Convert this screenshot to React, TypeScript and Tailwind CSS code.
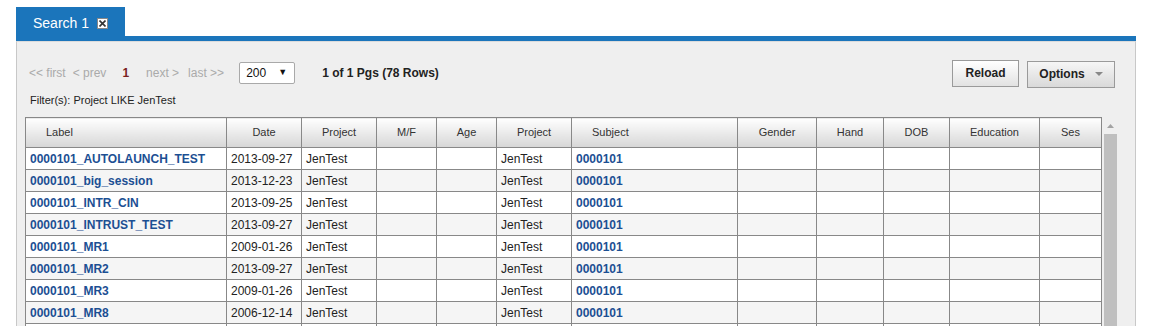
import React from "react";

const cols = [
  { name: "Label", w: 201, align: "left" },
  { name: "Date", w: 75, align: "center" },
  { name: "Project", w: 75, align: "center" },
  { name: "M/F", w: 60, align: "center" },
  { name: "Age", w: 60, align: "center" },
  { name: "Project", w: 75, align: "center" },
  { name: "Subject", w: 166, align: "left" },
  { name: "Gender", w: 79, align: "center" },
  { name: "Hand", w: 67, align: "center" },
  { name: "DOB", w: 66, align: "center" },
  { name: "Education", w: 90, align: "center" },
  { name: "Ses", w: 62, align: "center" },
];

const rows = [
  ["0000101_AUTOLAUNCH_TEST", "2013-09-27"],
  ["0000101_big_session", "2013-12-23"],
  ["0000101_INTR_CIN", "2013-09-25"],
  ["0000101_INTRUST_TEST", "2013-09-27"],
  ["0000101_MR1", "2009-01-26"],
  ["0000101_MR2", "2013-09-27"],
  ["0000101_MR3", "2009-01-26"],
  ["0000101_MR8", "2006-12-14"],
];

export default function App() {
  return (
    <div
      className="w-[1166px] h-[326px] bg-white overflow-hidden pt-[7px] pl-[16px]"
      style={{ fontFamily: '"Liberation Sans", Arial, sans-serif' }}
    >
      <div className="w-[1120px] flex flex-col">
        {/* Tab */}
        <div className="flex">
          <div className="h-[29px] w-[109px] bg-[#1b75bb] flex items-center pl-[17px] pt-[3px] text-white text-[14px]">
            <span>Search 1</span>
            <span className="ml-[8px] w-[11px] h-[11px] bg-white border border-[#888] flex items-center justify-center">
              <svg width="7" height="7" viewBox="0 0 7 7">
                <path d="M0.5 0.5 L6.5 6.5 M6.5 0.5 L0.5 6.5" stroke="#333" strokeWidth="1.6" />
              </svg>
            </span>
          </div>
        </div>
        <div className="h-[5px] bg-[#1b75bb]" />
        {/* Panel */}
        <div className="h-[300px] bg-[#efefef] border-l border-r border-t border-l-[#c8c8c8] border-r-[#c8c8c8] border-t-[#dcdcdc] pl-[8px] pt-[17px]">
          {/* Pager row */}
          <div className="flex items-center h-[28px] pr-[20px]">
            <div className="flex items-center pl-[4px] text-[12px] text-[#aaa]">
              <span>&lt;&lt; first</span>
              <span className="ml-[7px]">&lt; prev</span>
              <span className="ml-[16px] font-bold text-[#7a1f1f]">1</span>
              <span className="ml-[17px]">next &gt;</span>
              <span className="ml-[9px]">last &gt;&gt;</span>
            </div>
            <div className="ml-[15px] w-[56px] h-[22px] bg-white border border-[#a9a9a9] rounded-[2px] flex items-center justify-between pl-[6px] pr-[7px] text-[12px] text-[#111]">
              <span>200</span>
              <span className="text-[9px]">▼</span>
            </div>
            <div className="ml-[27px] text-[12px] font-bold text-[#222]">1 of 1 Pgs (78 Rows)</div>
            <div className="flex-1" />
            <button className="h-[27px] w-[67px] border border-[#9a9a9a] bg-[linear-gradient(#ffffff,#e2e2e2)] text-[12px] font-bold text-[#222]">
              Reload
            </button>
            <button className="ml-[8px] h-[27px] w-[88px] mt-[2px] border border-[#9a9a9a] bg-[linear-gradient(#f6f6f6,#d9d9d9)] text-[12px] font-bold text-[#222] flex items-center justify-center gap-[10px]">
              <span>Options</span>
              <svg width="8" height="5" viewBox="0 0 8 5">
                <path d="M0 0 L8 0 L4 4 Z" fill="#888" />
              </svg>
            </button>
          </div>
          {/* Filter */}
          <div className="mt-[6px] pl-[5px] h-[14px] leading-[14px] text-[11px] text-[#222]">
            Filter(s): Project LIKE JenTest
          </div>
          {/* Table + scrollbar */}
          <div className="mt-[10px] flex items-start">
            <table className="table-fixed border-collapse w-[1077px] text-[12px]">
              <colgroup>
                {cols.map((c, i) => (
                  <col key={i} style={{ width: c.w }} />
                ))}
              </colgroup>
              <thead>
                <tr className="h-[30px]">
                  {cols.map((c, i) => (
                    <th
                      key={i}
                      className={`border border-[#888] bg-[linear-gradient(#ffffff,#d6d6d6)] text-[11px] font-normal text-[#333] ${
                        c.align === "left" ? "text-left pl-[20px]" : "text-center"
                      }`}
                    >
                      {c.name}
                    </th>
                  ))}
                </tr>
              </thead>
              <tbody>
                {rows.map((r, i) => (
                  <tr key={i} className={`h-[22px] ${i % 2 === 0 ? "bg-white" : "bg-[#f5f5f5]"}`}>
                    <td className="border border-[#888] pl-[4px] py-0 leading-[20px] font-bold text-[#1c4f93] whitespace-nowrap">{r[0]}</td>
                    <td className="border border-[#888] pl-[4px] py-0 leading-[20px] text-[#222]">{r[1]}</td>
                    <td className="border border-[#888] pl-[4px] py-0 leading-[20px] text-[#222]">JenTest</td>
                    <td className="border border-[#888]" />
                    <td className="border border-[#888]" />
                    <td className="border border-[#888] pl-[4px] py-0 leading-[20px] text-[#222]">JenTest</td>
                    <td className="border border-[#888] pl-[4px] py-0 leading-[20px] font-bold text-[#1c4f93]">0000101</td>
                    <td className="border border-[#888]" />
                    <td className="border border-[#888]" />
                    <td className="border border-[#888]" />
                    <td className="border border-[#888]" />
                    <td className="border border-[#888]" />
                  </tr>
                ))}
                <tr className="h-[22px] bg-white">
                  {cols.map((_, i) => (
                    <td key={i} className="border border-[#888]" />
                  ))}
                </tr>
              </tbody>
            </table>
            <div className="w-[33px] flex flex-col items-start pl-[2px]">
              <div className="h-[17px] w-[13px] flex items-center justify-center">
                <svg width="7" height="4" viewBox="0 0 7 4">
                  <path d="M0 4 L3.5 0 L7 4 Z" fill="#a3a3a3" />
                </svg>
              </div>
              <div className="w-[13px] h-[200px] bg-[#bfbfbf]" />
            </div>
          </div>
        </div>
      </div>
    </div>
  );
}
